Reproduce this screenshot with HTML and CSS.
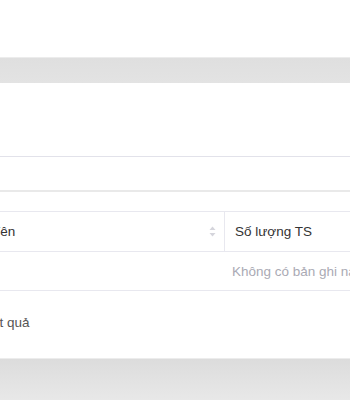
FILE: index.html
```html
<!DOCTYPE html>
<html>
<head>
    <meta charset="UTF-8">
    <title>Danh sách</title>
    <link rel="stylesheet" href="styles.css">
</head>
<body>
    <div class="top-panel"></div>
    <div class="gap"></div>

    <div class="card">
        <div class="card-head"></div>
        <div class="filter-bar"></div>

        <div class="table-area">
            <table class="data-table">
                <thead>
                    <tr>
                        <th class="col-name">
                            <span>Tên</span>
                            <span class="sort-icon">
                                <svg width="7" height="11" viewBox="0 0 7 11">
                                    <path d="M3.5 0.5 L6.5 4 L0.5 4 Z" fill="#d5d5dc"/>
                                    <path d="M3.5 10.5 L6.5 7 L0.5 7 Z" fill="#d5d5dc"/>
                                </svg>
                            </span>
                        </th>
                        <th class="col-count">Số lượng TS</th>
                    </tr>
                </thead>
                <tbody>
                    <tr>
                        <td colspan="2" class="empty-cell">Không có bản ghi nào</td>
                    </tr>
                </tbody>
            </table>

            <div class="result-bar">Kết quả</div>
        </div>
    </div>

    <div class="bottom"></div>
</body>
</html>
```

FILE: styles.css
```css
body {
    margin: 0;
    background-color: #e4e4e4;
    font-family: "Liberation Sans", Arial, sans-serif;
    overflow: hidden;
}
.top-panel {
    height: 57px;
    background-color: #fff;
}
.gap {
    height: 26px;
    background: linear-gradient(#ececec 0, #ececec 1px, #dfdfdf 1px, #e3e3e3 100%);
}
.card {
    height: 275px;
    background-color: #fff;
}
.card-head {
    height: 73px;
    border-bottom: 1px solid #e2e2ea;
}
.filter-bar {
    height: 33px;
    border-bottom: 2px solid #e9e9e9;
}
.table-area {
    padding-top: 19px;
    margin-left: -18px;
    width: 500px;
}
.data-table {
    border-collapse: collapse;
    width: 100%;
    font-size: 13.5px;
}
.data-table th {
    height: 39px;
    text-align: left;
    font-weight: normal;
    color: #333;
    border-top: 1px solid #e8e8ef;
    border-bottom: 1px solid #e8e8ef;
    padding: 0 10px;
}
.col-name {
    width: 222px;
    border-right: 1px solid #e8e8ef;
}
.col-name span:first-child {
    display: inline-block;
}
.sort-icon {
    float: right;
    margin-right: -2px;
    margin-top: 2px;
}
.sort-icon svg {
    display: block;
}
.empty-cell {
    height: 38px;
    padding: 0 0 0 250px;
    color: #aaaab4;
    border-bottom: 1px solid #e8e8ef;
}
.result-bar {
    height: 67px;
    line-height: 64px;
    padding-left: 1px;
    font-size: 13.5px;
    color: #555;
}
.bottom {
    height: 42px;
    background: linear-gradient(#ececec 0, #ececec 1px, #dcdcdc 1px, #e8e8e8 100%);
}
```
